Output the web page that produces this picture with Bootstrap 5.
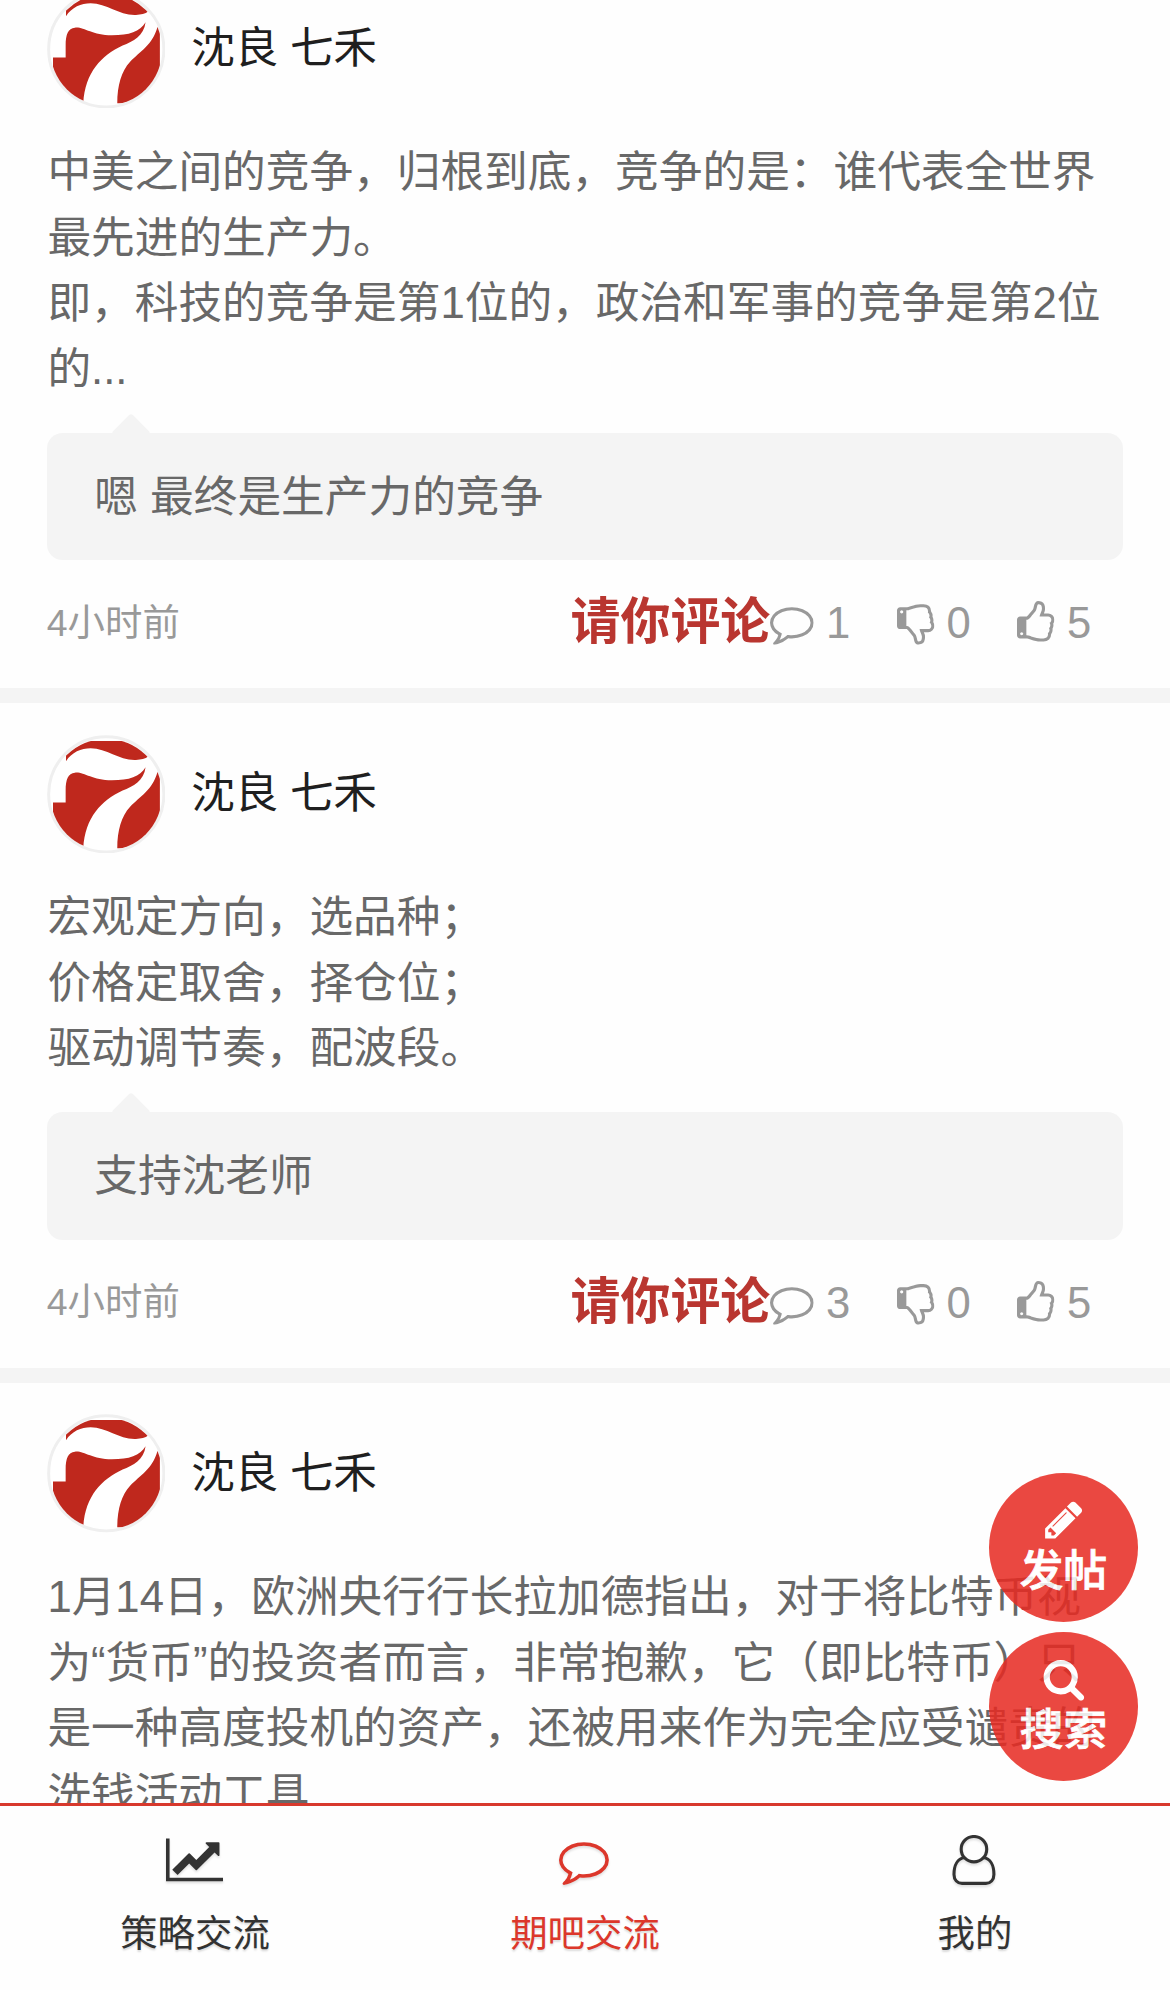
<!DOCTYPE html>
<html lang="zh-CN">
<head>
<meta charset="utf-8">
<meta name="viewport" content="width=device-width, initial-scale=1">
<title>期吧交流</title>
<link href="https://cdn.jsdelivr.net/npm/bootstrap@5.3.0/dist/css/bootstrap.min.css" rel="stylesheet">
<style>
  :root { --u: 3.12px; }
  html, body { height: 100%; overflow: hidden; }
  body {
    font-family: "Liberation Sans", "Noto Sans CJK SC", sans-serif;
    font-size: calc(14 * var(--u));
    line-height: 1.5;
    color: #686868;
    background: #fefefe;
  }
  .feed { margin-top: -41.7px; }
  .post { padding: calc(10 * var(--u)) calc(15 * var(--u)) 0; border-bottom: 15.6px solid #f4f4f4; }
  .post-gap { height: calc(5 * var(--u)); background: #f4f4f4; }
  .avatar { width: calc(38 * var(--u)); height: calc(38 * var(--u)); }
  .author { color: #1f1f1f; margin-left: 26px; padding-bottom: 2px; letter-spacing: -.3px; }
  .post-text { margin: calc(10 * var(--u)) 0 0; padding-left: .6px; white-space: nowrap; }
  .reply {
    background: #f4f4f4;
    border-radius: calc(5 * var(--u));
    margin-top: calc(10 * var(--u));
    padding: calc(10 * var(--u)) calc(15 * var(--u)) calc(10 * var(--u)) 47.5px;
  }
  .reply::before {
    content: "";
    position: absolute;
    left: 70px; top: -14px;
    width: 28px; height: 28px;
    border-radius: 3px;
    background: #f4f4f4;
    transform: rotate(45deg);
  }
  .meta { height: 128px; color: #999; padding-right: 32px; padding-bottom: 3px; }
  .time { font-size: calc(12 * var(--u)); }
  .invite { font-size: calc(16 * var(--u)); font-weight: 700; color: #b93630; line-height: 1; }
  .stat { gap: 12px; line-height: 1; }
  .stat + .stat { margin-left: 46.8px; }
  .ico { width: 1em; height: 1em; fill: currentColor; flex: none; display: block; overflow: visible; }
  .ico-thumb { width: .857em; }
  .ico-wide { width: 1.143em; }
  .fabs { right: 31.7px; bottom: 208.6px; gap: 9.3px; z-index: 1040; }
  .fab {
    width: calc(48 * var(--u)); height: calc(48 * var(--u));
    padding-top: 25px;
    background: rgb(231, 43, 34);
    color: #fff;
    opacity: .86;
    font-weight: 500;
    line-height: 1;
  }
  .fab span { margin-top: 8px; -webkit-text-stroke: .8px #fff; }
  .tabs { height: 187px; border-top: 3px solid #d8392d; background: #fefefe; }
  .tabs a { color: #333; font-size: calc(12 * var(--u)); line-height: 1; padding-top: 28.6px; }
  .tabs a.active { color: #dc372b; }
  .tabs .ico { font-size: calc(16 * var(--u)); filter: drop-shadow(0 2px 1px rgba(0,0,0,.12)); position: relative; left: -.6px; }
  .tabs span { margin-top: 31px; text-shadow: 0 2px 2px rgba(0,0,0,.14); }
</style>
</head>
<body>
<svg width="0" height="0" class="position-absolute" aria-hidden="true">
  <symbol id="i-comment" viewBox="0 0 1792 1792"><path d="M896 384q-204 0-381.5 69.5t-282 187.5-104.5 255q0 112 71.5 213.5t201.5 175.5l87 50-27 96q-24 91-70 172 152-63 275-171l43-38 57 6q69 8 130 8 204 0 381.5-69.5t282-187.5 104.5-255-104.5-255-282-187.5-381.5-69.5zm896 512q0 174-120 321.5t-326 233-450 85.5q-70 0-145-8-198 175-460 242-49 14-114 22h-5q-15 0-27-10.5t-16-27.5v-1q-3-4-.5-12t2-10 4.5-9.5l6-9 7-8.5 8-9q7-8 31-34.5t34.5-38 31-39.5 32.5-51 27-59 26-76q-157-89-247.5-220t-90.5-281q0-174 120-321.5t326-233 450-85.5 450 85.5 326 233 120 321.5z"/></symbol>
  <symbol id="i-up" viewBox="128 0 1536 1792"><path id="thumb" d="M384 1344q0-26-19-45t-45-19-45 19-19 45 19 45 45 19 45-19 19-45zm1152-576q0-51-39-89.5t-89-38.5h-352q0-58 48-159.5t48-160.5q0-98-32-145t-128-47q-26 26-38 85t-30.5 125.5-59.5 109.5q-22 23-77 91-4 5-23 30t-31.5 41-34.5 42.5-40 44-38.5 35.5-40 27-35.5 9h-32v640h32q13 0 31.5 3t33 6.5 38 11 35 11.5 35.5 12.5 29 10.5q211 73 342 73h121q192 0 192-167 0-26-5-56 30-16 47.5-52.5t17.5-73.5-18-69q53-50 53-119 0-25-10-55.5t-25-47.5q32-1 53.5-47t21.5-81zm128-1q0 89-49 163 9 33 9 69 0 77-38 144 3 21 3 43 0 101-60 178 1 139-85 219.5t-227 80.5h-129q-96 0-189.5-22.5t-216.5-65.5q-116-40-138-40h-288q-53 0-90.5-37.5t-37.5-90.5v-640q0-53 37.5-90.5t90.5-37.5h274q36-24 137-155 58-75 107-128 24-25 35.5-85.5t30.5-126.5 62-108q39-37 90-37 84 0 151 32.5t102 101.5 35 186q0 93-48 192h176q104 0 180 76t76 179z"/></symbol>
  <symbol id="i-down" viewBox="128 0 1536 1792"><use href="#thumb" transform="matrix(1 0 0 -1 0 1792)"/></symbol>
  <symbol id="i-chart" viewBox="0 0 2048 1792"><path d="M2048 1536v128h-2048v-1536h128v1408h1920zm-128-1248v435q0 21-19.5 29.5t-35.5-7.5l-121-121-633 633q-10 10-23 10t-23-10l-233-233-416 416-192-192 585-585q10-10 23-10t23 10l233 233 464-464-121-121q-16-16-7.5-35.5t29.5-19.5h435q14 0 23 9t9 23z"/></symbol>
  <symbol id="i-pencil" viewBox="0 0 1792 1792"><path d="M491 1536l91-91-235-235-91 91v107h128v128h107zm523-928q0-22-22-22-10 0-17 7l-542 542q-7 7-7 17 0 22 22 22 10 0 17-7l542-542q7-7 7-17zm-54-192l416 416-832 832h-416v-416zm683 96q0 53-37 90l-166 166-416-416 166-165q36-38 90-38 53 0 91 38l235 234q37 39 37 91z"/></symbol>
  <symbol id="i-search" viewBox="0 0 1792 1792"><path d="M1216 832q0-185-131.5-316.5t-316.5-131.5-316.5 131.5-131.5 316.5 131.5 316.5 316.5 131.5 316.5-131.5 131.5-316.5zm512 832q0 52-38 90t-90 38q-54 0-90-38l-343-342q-179 124-399 124-143 0-273.5-55.5t-225-150-150-225-55.5-273.5 55.5-273.5 150-225 225-150 273.5-55.5 273.5 55.5 225 150 150 225 55.5 273.5q0 220-124 399l343 343q37 37 37 90z"/></symbol>
  <symbol id="i-user" viewBox="0 0 50 50"><g fill="none" stroke="currentColor" stroke-width="3.1"><ellipse cx="25" cy="14.2" rx="12.8" ry="12.7"/><path d="M15.6 22.6C8.5 23.6 5 30.500 5 39.500C5 45 8.500 48.500 13 48.500H37C41.500 48.500 45 45 45 39.500C45 30.500 41.500 23.600 34.400 22.600"/></g></symbol>
  <symbol id="i-seven" viewBox="51 42 356 356">
    <clipPath id="disc"><circle cx="229" cy="221" r="168"/></clipPath>
    <circle cx="229" cy="220" r="173" fill="#fff" stroke="#efefef" stroke-width="9"/>
    <g clip-path="url(#disc)" fill="#bf281d">
      <path d="M108 121C125 94 154 82 182 82C232 83 268 119 318 117C334 116 345 114 356 106V60H108Z"/>
      <path d="M69 245H107V208C107 176 114 156 135 155C162 152 185 178 246 178C298 178 330 168 347 139C342 180 310 196 278 209C215 238 165 290 160 382H69Z"/>
      <path d="M262 382C262 328 275 285 300 258C330 226 368 207 383 152L390 158V382Z"/>
    </g>
  </symbol>
</svg>

<main class="feed">
  <article class="post">
    <header class="d-flex align-items-center">
      <svg class="avatar"><use href="#i-seven"/></svg>
      <span class="author">沈良 七禾</span>
    </header>
    <p class="post-text">中美之间的竞争，归根到底，竞争的是：谁代表全世界<br>最先进的生产力。<br>即，科技的竞争是第1位的，政治和军事的竞争是第2位<br>的...</p>
    <div class="reply position-relative">嗯 最终是生产力的竞争</div>
    <footer class="meta d-flex align-items-center">
      <span class="time me-auto">4小时前</span>
      <span class="invite">请你评论</span>
      <span class="stat d-flex align-items-center"><svg class="ico"><use href="#i-comment"/></svg><span>1</span></span>
      <span class="stat d-flex align-items-center"><svg class="ico ico-thumb"><use href="#i-down"/></svg><span>0</span></span>
      <span class="stat d-flex align-items-center"><svg class="ico ico-thumb"><use href="#i-up"/></svg><span>5</span></span>
    </footer>
  </article>

  <article class="post">
    <header class="d-flex align-items-center">
      <svg class="avatar"><use href="#i-seven"/></svg>
      <span class="author">沈良 七禾</span>
    </header>
    <p class="post-text">宏观定方向，选品种；<br>价格定取舍，择仓位；<br>驱动调节奏，配波段。</p>
    <div class="reply position-relative">支持沈老师</div>
    <footer class="meta d-flex align-items-center">
      <span class="time me-auto">4小时前</span>
      <span class="invite">请你评论</span>
      <span class="stat d-flex align-items-center"><svg class="ico"><use href="#i-comment"/></svg><span>3</span></span>
      <span class="stat d-flex align-items-center"><svg class="ico ico-thumb"><use href="#i-down"/></svg><span>0</span></span>
      <span class="stat d-flex align-items-center"><svg class="ico ico-thumb"><use href="#i-up"/></svg><span>5</span></span>
    </footer>
  </article>

  <article class="post">
    <header class="d-flex align-items-center">
      <svg class="avatar"><use href="#i-seven"/></svg>
      <span class="author">沈良 七禾</span>
    </header>
    <p class="post-text">1月14日，欧洲央行行长拉加德指出，对于将比特币视<br>为“货币”的投资者而言，非常抱歉，它（即比特币）只<br>是一种高度投机的资产，还被用来作为完全应受谴责的<br>洗钱活动工具...</p>
  </article>
</main>

<div class="fabs position-fixed d-flex flex-column">
  <a class="fab rounded-circle d-flex flex-column align-items-center text-decoration-none"><svg class="ico"><use href="#i-pencil"/></svg><span>发帖</span></a>
  <a class="fab rounded-circle d-flex flex-column align-items-center text-decoration-none"><svg class="ico"><use href="#i-search"/></svg><span>搜索</span></a>
</div>

<nav class="tabs fixed-bottom d-flex">
  <a class="col-4 d-flex flex-column align-items-center text-decoration-none"><svg class="ico ico-wide"><use href="#i-chart"/></svg><span>策略交流</span></a>
  <a class="col-4 d-flex flex-column align-items-center text-decoration-none active"><svg class="ico"><use href="#i-comment"/></svg><span>期吧交流</span></a>
  <a class="col-4 d-flex flex-column align-items-center text-decoration-none"><svg class="ico"><use href="#i-user"/></svg><span>我的</span></a>
</nav>
<script src="https://cdn.jsdelivr.net/npm/bootstrap@5.3.0/dist/js/bootstrap.bundle.min.js"></script>
</body>
</html>
